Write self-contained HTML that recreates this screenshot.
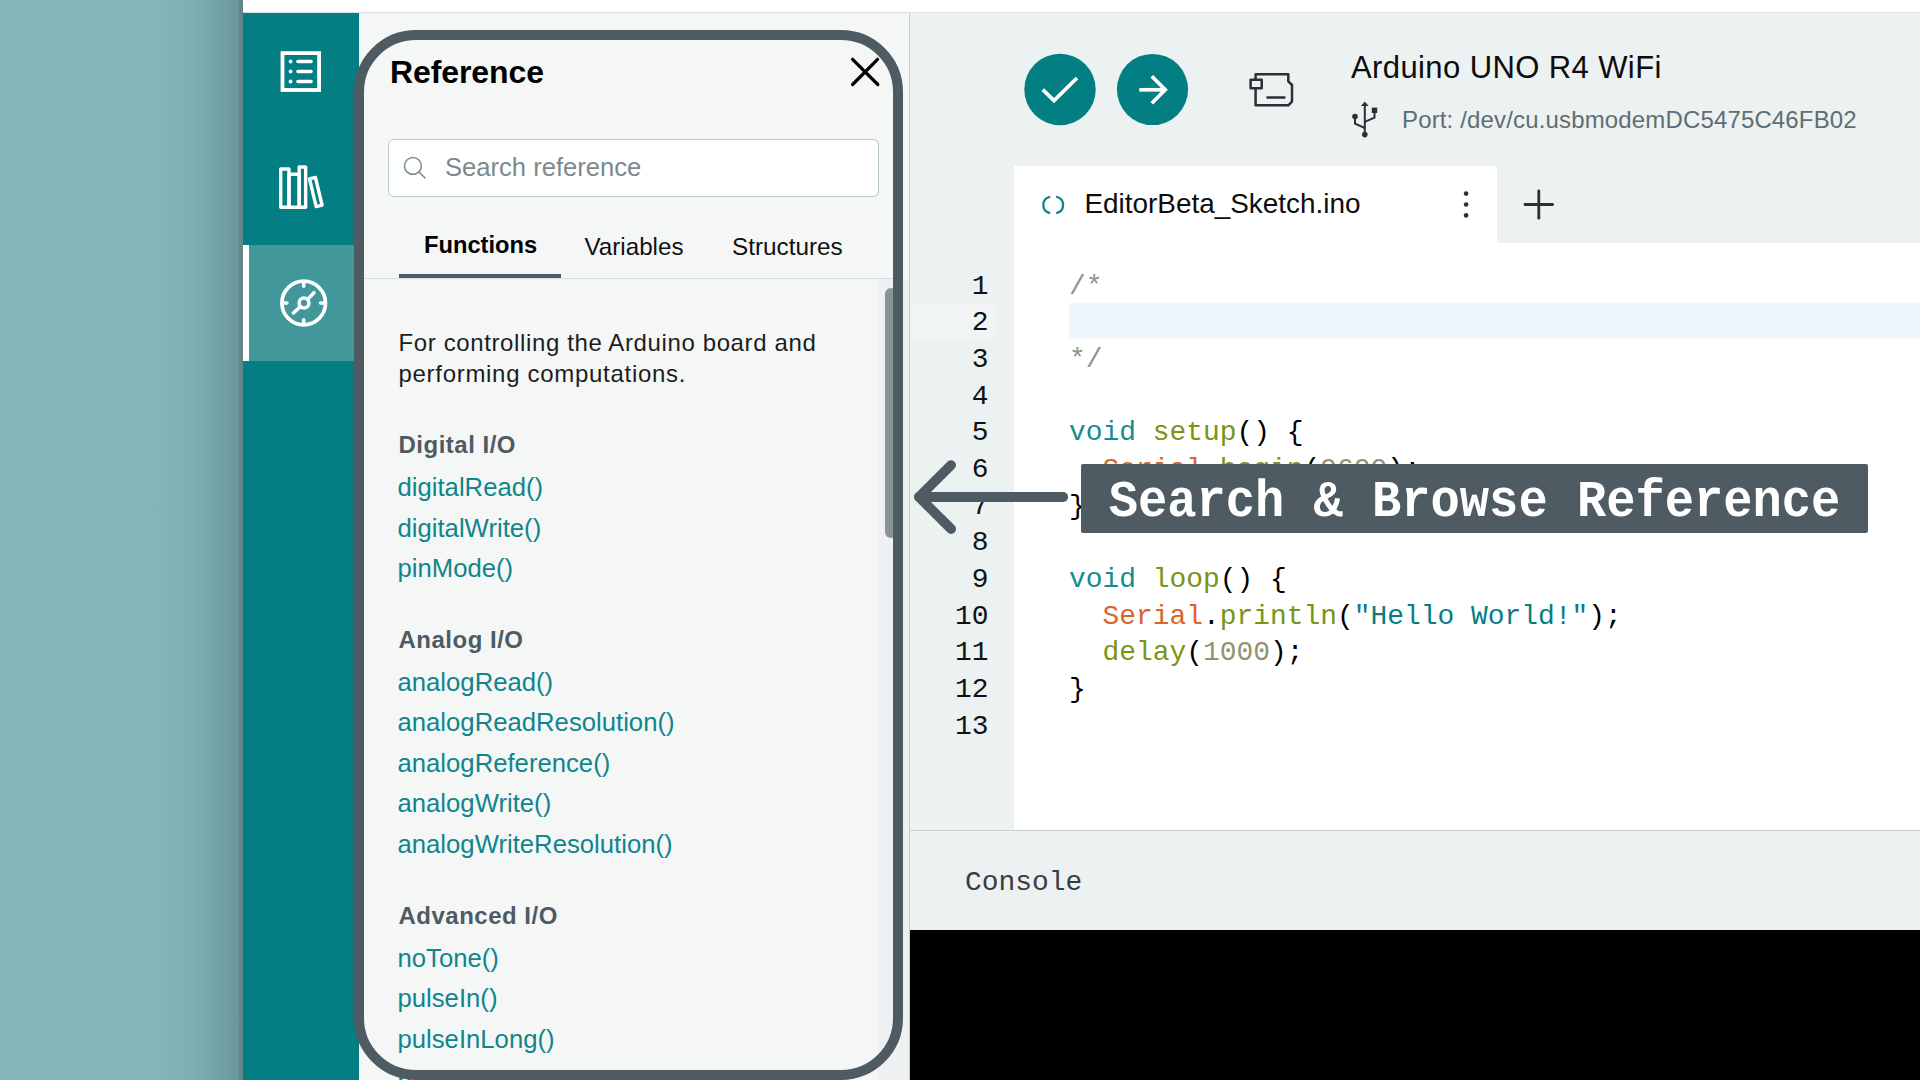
<!DOCTYPE html>
<html><head><meta charset="utf-8">
<style>
*{margin:0;padding:0;box-sizing:border-box}
html,body{width:1920px;height:1080px;overflow:hidden;background:#fff}
body{position:relative;font-family:"Liberation Sans",sans-serif}
.abs{position:absolute}
.t{position:absolute;line-height:1;white-space:pre;font-family:"Liberation Sans",sans-serif}
.m{font-family:"Liberation Mono",monospace}
#leftbg{left:0;top:0;width:243px;height:1080px;background:linear-gradient(to right,#84b7bb 0px,#84b7bb 150px,#7eb1b5 190px,#77a9ad 205px,#6f9da1 228px,#6a9698 238px,#62878a 243px)}
#topbar{left:243px;top:0;width:1677px;height:13px;background:#fff;border-bottom:1px solid #d9e2e2}
#sidebar{left:243px;top:13px;width:116px;height:1067px;background:#037f83}
#active{left:243px;top:245px;width:116px;height:116px;background:#419799}
#activebar{left:243px;top:245px;width:6px;height:116px;background:#fff}
#panel{left:359px;top:13px;width:550px;height:1067px;background:#f5f7f7}
#vline{left:909px;top:13px;width:1px;height:1067px;background:#c3cfcf}
#hdr{left:910px;top:13px;width:1010px;height:230px;background:#ecf1f1}
#tab{left:1014px;top:166px;width:483px;height:77px;background:#fff}
#gutter{left:910px;top:243px;width:104px;height:587px;background:#ecf1f1}
#code{left:1014px;top:243px;width:906px;height:587px;background:#fff}
#hline{left:910px;top:830px;width:1010px;height:1px;background:#c7d2d2}
#conhdr{left:910px;top:831px;width:1010px;height:99px;background:#ecf1f1}
#console{left:910px;top:930px;width:1010px;height:150px;background:#000}
#frame{left:354px;top:30px;width:549px;height:1050px;border:10px solid #4f5b62;border-radius:62px}
#search{left:388px;top:139px;width:491px;height:58px;background:#fff;border:1.5px solid #b9c8c8;border-radius:6px}
#tabline{left:364px;top:278px;width:529px;height:1px;background:#d5dede}
#tabul{left:399px;top:274px;width:162px;height:4px;background:#4f5b62}
#sbtrack{left:878px;top:279px;width:31px;height:801px;background:#edf1f1}
#sbthumb{left:885px;top:288px;width:12px;height:250px;background:#8a9393;border-radius:6px}
</style></head><body>
<div id="leftbg" class="abs"></div>
<div class="abs" style="left:239px;top:0;width:4px;height:1080px;background:#61858a"></div>
<div id="topbar" class="abs"></div>
<div id="sidebar" class="abs"></div>
<div id="active" class="abs"></div>
<div id="activebar" class="abs"></div>
<svg class="abs" style="left:0;top:0" width="1920" height="1080" viewBox="0 0 1920 1080">
<g fill="none" stroke="#fff">
<rect x="282.5" y="53.1" width="36.6" height="36.9" stroke-width="3.8"/>
<g stroke-width="3.6" stroke-linecap="round">
<line x1="298" y1="61.5" x2="311" y2="61.5"/><line x1="298" y1="71.5" x2="311" y2="71.5"/><line x1="298" y1="81.5" x2="311" y2="81.5"/>
</g>
<g stroke-width="3.4" stroke-linejoin="round">
<rect x="280.7" y="169" width="8.3" height="38.25"/>
<rect x="289" y="174.2" width="10.2" height="33.05"/>
<rect x="299.2" y="167" width="6.45" height="40.25"/>
<rect x="312.75" y="177.7" width="6.1" height="28.6" transform="rotate(-13.5 315.8 192)"/>
</g>
<g stroke-width="3.7">
<circle cx="303.7" cy="303" r="21.8"/>
<circle cx="304" cy="303" r="4.9" stroke-width="3.5"/>
</g>
<g stroke-width="3.5" stroke-linecap="round">
<line x1="303.7" y1="283" x2="303.7" y2="286.3"/>
<line x1="303.7" y1="319.7" x2="303.7" y2="323"/>
<line x1="283.6" y1="303" x2="286.9" y2="303"/>
<line x1="320.5" y1="303" x2="323.8" y2="303"/>
<line x1="293.4" y1="313" x2="300.3" y2="306.6"/>
<line x1="307.6" y1="299.4" x2="314" y2="292.7"/>
</g>
</g>
<g fill="#fff"><circle cx="290.6" cy="61.5" r="1.9"/><circle cx="290.6" cy="71.5" r="1.9"/><circle cx="290.6" cy="81.5" r="1.9"/></g>
</svg>

<div id="panel" class="abs"></div>
<div id="sbtrack" class="abs"></div><div id="sbthumb" class="abs"></div>
<div class="t" style="left:390px;top:55.80px;font-size:32px;color:#000;font-weight:bold;letter-spacing:-0.1px;">Reference</div>
<div id="search" class="abs"></div>
<svg class="abs" style="left:0;top:0" width="1920" height="1080" viewBox="0 0 1920 1080">
<g fill="none" stroke="#000" stroke-width="3.2" stroke-linecap="round"><line x1="852.6" y1="59.3" x2="877.8" y2="84.5"/><line x1="877.6" y1="59.3" x2="852.6" y2="84.5"/></g>
<g fill="none" stroke="#7f8f90" stroke-width="1.6" stroke-linecap="round"><circle cx="412.9" cy="165.9" r="8.4"/><line x1="419" y1="172" x2="425" y2="178"/></g>
</svg>
<div class="t" style="left:445px;top:155.34px;font-size:25.6px;color:#7b8a8b;font-weight:normal;letter-spacing:0px;">Search reference</div>
<div class="t" style="left:424px;top:233.55px;font-size:23.7px;color:#000;font-weight:bold;letter-spacing:0px;">Functions</div>
<div class="t" style="left:584.5px;top:235.33px;font-size:24.2px;color:#111;font-weight:normal;letter-spacing:0px;">Variables</div>
<div class="t" style="left:732px;top:235.25px;font-size:24.3px;color:#111;font-weight:normal;letter-spacing:0px;">Structures</div>
<div id="tabline" class="abs"></div><div id="tabul" class="abs"></div>
<div class="t" style="left:398.5px;top:331.20px;font-size:24px;color:#1c1d1e;font-weight:normal;letter-spacing:0.62px;">For controlling the Arduino board and</div>
<div class="t" style="left:398.5px;top:361.90px;font-size:24px;color:#1c1d1e;font-weight:normal;letter-spacing:0.7px;">performing computations.</div>
<div class="t" style="left:398.5px;top:433.00px;font-size:24px;color:#4f5b62;font-weight:bold;letter-spacing:0.5px;">Digital I/O</div>
<div class="t" style="left:397.5px;top:475.36px;font-size:25.7px;color:#10858b;font-weight:normal;letter-spacing:0px;">digitalRead()</div>
<div class="t" style="left:397.5px;top:515.86px;font-size:25.7px;color:#10858b;font-weight:normal;letter-spacing:0px;">digitalWrite()</div>
<div class="t" style="left:397.5px;top:556.36px;font-size:25.7px;color:#10858b;font-weight:normal;letter-spacing:0px;">pinMode()</div>
<div class="t" style="left:398.5px;top:628.10px;font-size:24px;color:#4f5b62;font-weight:bold;letter-spacing:0.5px;">Analog I/O</div>
<div class="t" style="left:397.5px;top:669.95px;font-size:25.7px;color:#10858b;font-weight:normal;letter-spacing:0px;">analogRead()</div>
<div class="t" style="left:397.5px;top:710.45px;font-size:25.7px;color:#10858b;font-weight:normal;letter-spacing:0px;">analogReadResolution()</div>
<div class="t" style="left:397.5px;top:750.95px;font-size:25.7px;color:#10858b;font-weight:normal;letter-spacing:0px;">analogReference()</div>
<div class="t" style="left:397.5px;top:791.45px;font-size:25.7px;color:#10858b;font-weight:normal;letter-spacing:0px;">analogWrite()</div>
<div class="t" style="left:397.5px;top:831.95px;font-size:25.7px;color:#10858b;font-weight:normal;letter-spacing:0px;">analogWriteResolution()</div>
<div class="t" style="left:398.5px;top:904.00px;font-size:24px;color:#4f5b62;font-weight:bold;letter-spacing:0.5px;">Advanced I/O</div>
<div class="t" style="left:397.5px;top:945.95px;font-size:25.7px;color:#10858b;font-weight:normal;letter-spacing:0px;">noTone()</div>
<div class="t" style="left:397.5px;top:986.45px;font-size:25.7px;color:#10858b;font-weight:normal;letter-spacing:0px;">pulseIn()</div>
<div class="t" style="left:397.5px;top:1026.95px;font-size:25.7px;color:#10858b;font-weight:normal;letter-spacing:0px;">pulseInLong()</div>
<div class="t" style="left:397.5px;top:1069.15px;font-size:25.7px;color:#10858b;font-weight:normal;letter-spacing:0px;">pulseOut()</div>
<div id="frame" class="abs"></div>

<div id="vline" class="abs"></div>
<div id="hdr" class="abs"></div>
<div id="tab" class="abs"></div>
<div id="gutter" class="abs"></div>
<div id="code" class="abs"></div>
<div id="hline" class="abs"></div>
<div id="conhdr" class="abs"></div>
<div id="console" class="abs"></div>
<div class="abs" style="left:912px;top:303px;width:83px;height:36px;background:#f0f4f4"></div>
<div class="abs" style="left:1069px;top:303px;width:851px;height:36px;background:#f0f7fc"></div>
<svg class="abs" style="left:0;top:0" width="1920" height="1080" viewBox="0 0 1920 1080">
<circle cx="1060" cy="89.5" r="35.7" fill="#037f83"/>
<circle cx="1152.5" cy="89.5" r="35.6" fill="#037f83"/>
<polyline points="1042.8,89.6 1054,100.6 1077,78" fill="none" stroke="#fff" stroke-width="3.7"/>
<g fill="none" stroke="#fff" stroke-width="3.7"><line x1="1139.3" y1="89.8" x2="1165" y2="89.8"/><polyline points="1151.8,76.3 1165.2,89.8 1151.8,103.3"/></g>
<g fill="none" stroke="#2b3033" stroke-width="2.5" stroke-linejoin="round" stroke-linecap="round">
<path d="M1255.6,79.7 V74.2 H1288.3 V81.4 L1292,85 V101.7 L1288.3,105.3 H1255.6 V88.3"/>
<rect x="1250.6" y="79.7" width="11.1" height="8.5"/>
<line x1="1267.5" y1="97.5" x2="1284.4" y2="97.5"/>
</g>
<g fill="none" stroke="#2b3033" stroke-width="2">
<line x1="1364.8" y1="104" x2="1364.8" y2="133"/>
<polyline points="1355,117 1355,123.7 1364.8,128"/>
<polyline points="1374.5,111 1374.5,117.7 1364.8,121.8"/>
</g>
<g fill="#2b3033">
<polygon points="1364.8,101.5 1368.6,106 1361,106"/>
<circle cx="1364.8" cy="134.6" r="2.8"/>
<circle cx="1355" cy="116.5" r="2.8"/>
<rect x="1371.8" y="107.6" width="5.4" height="5.4"/>
</g>
<g fill="none" stroke="#10858b" stroke-width="2.3" stroke-linecap="round">
<path d="M1049.3,197 A8.2,8.2 0 0 0 1049.3,212.8"/>
<path d="M1057.1,197 A8.2,8.2 0 0 1 1057.1,212.8"/>
</g>
<g fill="#2b3033"><circle cx="1466.1" cy="193.6" r="2.3"/><circle cx="1466.1" cy="204.5" r="2.3"/><circle cx="1466.1" cy="215.4" r="2.3"/></g>
<g fill="none" stroke="#2b3033" stroke-width="2.8" stroke-linecap="round">
<line x1="1525" y1="204.5" x2="1552.6" y2="204.5"/><line x1="1538.8" y1="191" x2="1538.8" y2="218.2"/>
</g>
</svg>
<div class="t" style="left:1351px;top:51.65px;font-size:31px;color:#0d0d0d;font-weight:normal;letter-spacing:0.4px;">Arduino UNO R4 WiFi</div>
<div class="t" style="left:1402px;top:107.60px;font-size:24px;color:#5f6e72;font-weight:normal;letter-spacing:0.15px;">Port: /dev/cu.usbmodemDC5475C46FB02</div>
<div class="t" style="left:1084.5px;top:190.38px;font-size:27.9px;color:#0d0d0d;font-weight:normal;letter-spacing:0px;">EditorBeta_Sketch.ino</div>
<div class="t m" style="left:0px;top:272.53px;font-size:27.92px;color:#111;font-weight:normal;letter-spacing:0px;width:988.5px;text-align:right;">1</div>
<div class="t m" style="left:0px;top:309.21px;font-size:27.92px;color:#111;font-weight:normal;letter-spacing:0px;width:988.5px;text-align:right;">2</div>
<div class="t m" style="left:0px;top:345.89px;font-size:27.92px;color:#111;font-weight:normal;letter-spacing:0px;width:988.5px;text-align:right;">3</div>
<div class="t m" style="left:0px;top:382.57px;font-size:27.92px;color:#111;font-weight:normal;letter-spacing:0px;width:988.5px;text-align:right;">4</div>
<div class="t m" style="left:0px;top:419.25px;font-size:27.92px;color:#111;font-weight:normal;letter-spacing:0px;width:988.5px;text-align:right;">5</div>
<div class="t m" style="left:0px;top:455.93px;font-size:27.92px;color:#111;font-weight:normal;letter-spacing:0px;width:988.5px;text-align:right;">6</div>
<div class="t m" style="left:0px;top:492.61px;font-size:27.92px;color:#111;font-weight:normal;letter-spacing:0px;width:988.5px;text-align:right;">7</div>
<div class="t m" style="left:0px;top:529.29px;font-size:27.92px;color:#111;font-weight:normal;letter-spacing:0px;width:988.5px;text-align:right;">8</div>
<div class="t m" style="left:0px;top:565.97px;font-size:27.92px;color:#111;font-weight:normal;letter-spacing:0px;width:988.5px;text-align:right;">9</div>
<div class="t m" style="left:0px;top:602.65px;font-size:27.92px;color:#111;font-weight:normal;letter-spacing:0px;width:988.5px;text-align:right;">10</div>
<div class="t m" style="left:0px;top:639.33px;font-size:27.92px;color:#111;font-weight:normal;letter-spacing:0px;width:988.5px;text-align:right;">11</div>
<div class="t m" style="left:0px;top:676.01px;font-size:27.92px;color:#111;font-weight:normal;letter-spacing:0px;width:988.5px;text-align:right;">12</div>
<div class="t m" style="left:0px;top:712.69px;font-size:27.92px;color:#111;font-weight:normal;letter-spacing:0px;width:988.5px;text-align:right;">13</div>
<div class="t m" style="left:1069px;top:272.53px;font-size:27.92px;color:#000;font-weight:normal;letter-spacing:0px;"><span style="color:#8a9597">/*</span></div>
<div class="t m" style="left:1069px;top:345.89px;font-size:27.92px;color:#000;font-weight:normal;letter-spacing:0px;"><span style="color:#8a9597">*/</span></div>
<div class="t m" style="left:1069px;top:419.25px;font-size:27.92px;color:#000;font-weight:normal;letter-spacing:0px;"><span style="color:#168b90">void</span> <span style="color:#7a9415">setup</span><span style="color:#000">() {</span></div>
<div class="t m" style="left:1069px;top:455.93px;font-size:27.92px;color:#000;font-weight:normal;letter-spacing:0px;">  <span style="color:#dc6425">Serial</span><span style="color:#000">.</span><span style="color:#7a9415">begin</span><span style="color:#000">(</span><span style="color:#8f9470">9600</span><span style="color:#000">);</span></div>
<div class="t m" style="left:1069px;top:492.61px;font-size:27.92px;color:#000;font-weight:normal;letter-spacing:0px;"><span style="color:#000">}</span></div>
<div class="t m" style="left:1069px;top:565.97px;font-size:27.92px;color:#000;font-weight:normal;letter-spacing:0px;"><span style="color:#168b90">void</span> <span style="color:#7a9415">loop</span><span style="color:#000">() {</span></div>
<div class="t m" style="left:1069px;top:602.65px;font-size:27.92px;color:#000;font-weight:normal;letter-spacing:0px;">  <span style="color:#dc6425">Serial</span><span style="color:#000">.</span><span style="color:#7a9415">println</span><span style="color:#000">(</span><span style="color:#0a7d83">&quot;Hello World!&quot;</span><span style="color:#000">);</span></div>
<div class="t m" style="left:1069px;top:639.33px;font-size:27.92px;color:#000;font-weight:normal;letter-spacing:0px;">  <span style="color:#7a9415">delay</span><span style="color:#000">(</span><span style="color:#8f9470">1000</span><span style="color:#000">);</span></div>
<div class="t m" style="left:1069px;top:676.01px;font-size:27.92px;color:#000;font-weight:normal;letter-spacing:0px;"><span style="color:#000">}</span></div>
<div class="t m" style="left:965px;top:869.48px;font-size:27.92px;color:#3a3d3f;font-weight:normal;letter-spacing:0px;">Console</div>
<svg class="abs" style="left:0;top:0" width="1920" height="1080" viewBox="0 0 1920 1080">
<g fill="none" stroke="#4f5b62" stroke-width="9.8" stroke-linecap="round" stroke-linejoin="round">
<polyline points="951.1,465.1 919,497 951.1,529"/>
<line x1="919" y1="497" x2="1063.2" y2="497"/>
</g></svg>
<div class="abs" style="left:1081px;top:464px;width:787px;height:68.5px;background:#4f5b62;border-radius:2px"></div>
<div class="t m" style="left:1108.7px;top:479.18px;font-size:48.77px;color:#fff;font-weight:bold;letter-spacing:0px;transform:scaleY(1.076);transform-origin:0 37.07px;">Search &amp; Browse Reference</div>

</body></html>
